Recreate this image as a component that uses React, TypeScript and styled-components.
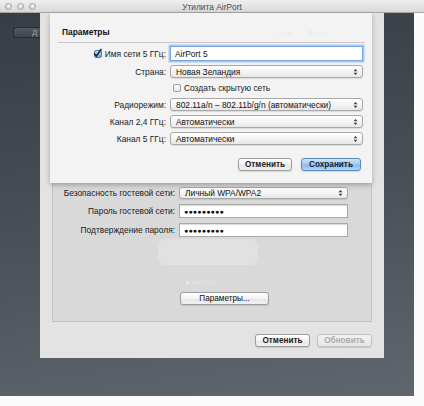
import styled, { createGlobalStyle } from "styled-components";

const Global = createGlobalStyle`
  html, body { margin: 0; padding: 0; background: #fbfbfb; }
  body { font-family: "Liberation Sans", Arial, sans-serif; }
  * { box-sizing: border-box; }
`;

const Screen = styled.div`
  width: 424px;
  height: 406px;
  display: flex;
  flex-direction: column;
  background: #fbfbfb;
  overflow: hidden;
`;

const TitleBar = styled.div`
  height: 13px;
  flex: none;
  display: grid;
  grid-template-columns: 1fr auto 1fr;
  align-items: center;
  background: linear-gradient(#efefef, #d9d9d9);
  border-bottom: 1px solid #a6a6a6;
`;

const Lights = styled.div`
  display: flex;
  gap: 5px;
  padding-left: 5px;
`;

const Light = styled.span`
  width: 7px;
  height: 7px;
  border-radius: 50%;
  border: 1px solid #a3a3a3;
  background: radial-gradient(circle at 50% 35%, #f4f4f4, #c9c9c9);
`;

const Title = styled.div`
  font-size: 8.4px;
  color: #4b4b4b;
  padding-top: 1px;
`;

const Body = styled.div`
  height: 383px;
  flex: none;
  display: flex;
`;

const Desktop = styled.div`
  width: 414px;
  display: flex;
  align-items: flex-start;
  background: linear-gradient(172deg, #363d45 0%, #464d55 45%, #60666d 100%);
`;

const Side = styled.div`
  width: 40px;
  flex: none;
  padding: 14px 0 0 13px;
`;

const DarkButton = styled.div`
  width: 27px;
  height: 11px;
  border: 1px solid #262b31;
  border-right: none;
  border-radius: 3px 0 0 3px;
  background: linear-gradient(#525961, #3c434a);
  color: #9aa2ab;
  font-size: 8px;
  line-height: 9px;
  padding-left: 18px;
`;

const Window = styled.div`
  width: 344px;
  height: 345px;
  flex: none;
  display: flex;
  flex-direction: column;
  background: #e3e3e3;
`;

const Sheet = styled.div`
  position: relative;
  z-index: 1;
  margin-left: 10px;
  width: 322px;
  height: 170px;
  flex: none;
  background: #f3f3f3;
  box-shadow: 0 2px 5px rgba(0, 0, 0, 0.28);
  display: flex;
  flex-direction: column;
`;

const SheetHead = styled.div`
  display: flex;
  align-items: flex-end;
  padding: 12px 0 0 12px;
  height: 24px;
`;

const SheetTitle = styled.div`
  font-size: 8.4px;
  font-weight: bold;
  color: #111;
`;

const Ghost = styled.span<{ $ml?: number }>`
  font-size: 8px;
  color: rgba(0, 0, 0, 0.06);
  margin-left: ${(p) => p.$ml ?? 0}px;
  white-space: nowrap;
`;

const Rule = styled.div`
  height: 1px;
  margin: 5px 7px 0 8px;
  background: #c7c7c7;
`;

const Form = styled.div<{ $label: number; $control: number }>`
  display: grid;
  grid-template-columns: ${(p) => p.$label}px ${(p) => p.$control}px;
  column-gap: 4px;
  row-gap: 4px;
  align-items: center;
`;

const Label = styled.div`
  display: flex;
  justify-content: flex-end;
  align-items: center;
  gap: 3px;
  font-size: 8.4px;
  color: #1a1a1a;
  white-space: nowrap;
`;

const Field = styled.div<{ $h?: number; $focus?: boolean }>`
  height: ${(p) => p.$h ?? 14}px;
  display: flex;
  align-items: center;
  padding-left: 4px;
  background: #fff;
  border: 1px solid ${(p) => (p.$focus ? "#7aa7dd" : "#a9a9a9")};
  box-shadow: ${(p) =>
    p.$focus ? "0 0 0 1.5px #a9c8ee" : "inset 0 1px 1px rgba(0,0,0,0.15)"};
  font-size: 8.4px;
  color: #111;
`;

const Dots = styled.span`
  font-size: 7px;
  letter-spacing: 0.2px;
  color: #111;
`;

const Popup = styled.div<{ $h?: number }>`
  height: ${(p) => p.$h ?? 13}px;
  display: flex;
  align-items: center;
  justify-content: space-between;
  padding: 0 4px 0 5px;
  border: 1px solid #a8a8a8;
  border-radius: 3px;
  background: linear-gradient(#ffffff, #f3f3f3 55%, #e7e7e7);
  box-shadow: 0 1px 1px rgba(0, 0, 0, 0.1);
  font-size: 8.4px;
  color: #111;
  white-space: nowrap;
`;

const Arrows = () => (
  <svg width="5" height="8" viewBox="0 0 5 8">
    <path d="M0.6 3.2 L2.5 0.9 L4.4 3.2 Z M0.6 4.8 L2.5 7.1 L4.4 4.8 Z" fill="#3a3a3a" />
  </svg>
);

const Box = styled.span<{ $on?: boolean }>`
  width: 8px;
  height: 8px;
  flex: none;
  border-radius: 2px;
  border: 1px solid ${(p) => (p.$on ? "#56779e" : "#9c9c9c")};
  background: ${(p) =>
    p.$on ? "linear-gradient(#c3dbf3, #74a5da)" : "linear-gradient(#ffffff, #e6e6e6)"};
  display: inline-flex;
  align-items: center;
  justify-content: center;
  overflow: visible;
`;

const Tick = () => (
  <svg width="9" height="9" viewBox="0 0 9 9" style={{ overflow: "visible" }}>
    <path d="M1.2 4.6 L3.4 7 L8.4 0" fill="none" stroke="#1b2838" strokeWidth="1.5" />
  </svg>
);

const CheckRow = styled.div`
  display: flex;
  align-items: center;
  gap: 3px;
  padding-left: 3px;
  font-size: 8.4px;
  color: #1a1a1a;
  height: 12px;
`;

const ButtonRow = styled.div<{ $top: number; $right: number; $gap: number }>`
  display: flex;
  justify-content: flex-end;
  align-items: center;
  margin-top: ${(p) => p.$top}px;
  padding-right: ${(p) => p.$right}px;
  gap: ${(p) => p.$gap}px;
`;

const Button = styled.div<{ $w: number; $kind?: "default" | "disabled" }>`
  width: ${(p) => p.$w}px;
  height: 13px;
  display: flex;
  align-items: center;
  justify-content: center;
  border-radius: 3px;
  font-size: 8.2px;
  font-weight: bold;
  border: 1px solid
    ${(p) => (p.$kind === "default" ? "#5a88bd" : p.$kind === "disabled" ? "#c2c2c2" : "#9c9c9c")};
  color: ${(p) => (p.$kind === "default" ? "#0f2440" : p.$kind === "disabled" ? "#ababab" : "#222")};
  background: ${(p) =>
    p.$kind === "default"
      ? "linear-gradient(#d3e6fa, #9cc6ef 50%, #86b8ea 52%, #b4d6f6)"
      : p.$kind === "disabled"
      ? "linear-gradient(#f2f2f2, #e6e6e6)"
      : "linear-gradient(#ffffff, #f2f2f2 50%, #e6e6e6 52%, #f1f1f1)"};
  box-shadow: 0 1px 1px rgba(0, 0, 0, 0.12);
  white-space: nowrap;
`;

const Group = styled.div`
  margin-left: 12px;
  width: 320px;
  height: 139px;
  flex: none;
  background: #d9d9d9;
  border: 1px solid #c3c3c3;
  border-top: none;
  display: flex;
  flex-direction: column;
  padding-top: 4px;
`;

const Shade = styled.div`
  margin: 2px 0 0 105px;
  width: 100px;
  height: 26px;
  border-radius: 7px;
  background: rgba(255, 255, 255, 0.22);
`;

const FaintLine = styled.div`
  margin: 13px 0 0 132px;
  height: 9px;
  font-size: 8px;
  color: rgba(255, 255, 255, 0.35);
`;

const Wide = styled(Button)`
  margin: 5px 0 0 127px;
  font-weight: normal;
  color: #111;
`;

export default function App() {
  return (
    <>
      <Global />
      <Screen>
        <TitleBar>
          <Lights>
            <Light />
            <Light />
            <Light />
          </Lights>
          <Title>Утилита AirPort</Title>
          <div />
        </TitleBar>
        <Body>
          <Desktop>
            <Side>
              <DarkButton>Д</DarkButton>
            </Side>
            <Window>
              <Sheet>
                <SheetHead>
                  <SheetTitle>Параметры</SheetTitle>
                  <Ghost $ml={165}>Сеть</Ghost>
                  <Ghost $ml={15}>Диски</Ghost>
                </SheetHead>
                <Rule />
                <Form $label={116} $control={193} style={{ marginTop: 3 }}>
                  <Label>
                    <Box $on>
                      <Tick />
                    </Box>
                    Имя сети 5 ГГц:
                  </Label>
                  <Field $h={15} $focus>AirPort 5</Field>

                  <Label>Страна:</Label>
                  <Popup>
                    Новая Зеландия
                    <Arrows />
                  </Popup>

                  <div />
                  <CheckRow>
                    <Box />
                    Создать скрытую сеть
                  </CheckRow>

                  <Label>Радиорежим:</Label>
                  <Popup>
                    802.11a/n – 802.11b/g/n (автоматически)
                    <Arrows />
                  </Popup>

                  <Label>Канал 2,4 ГГц:</Label>
                  <Popup>
                    Автоматически
                    <Arrows />
                  </Popup>

                  <Label>Канал 5 ГГц:</Label>
                  <Popup>
                    Автоматически
                    <Arrows />
                  </Popup>
                </Form>
                <ButtonRow $top={13} $right={11} $gap={9}>
                  <Button $w={54}>Отменить</Button>
                  <Button $w={60} $kind="default">
                    Сохранить
                  </Button>
                </ButtonRow>
              </Sheet>

              <Group>
                <Form $label={122} $control={169} style={{ rowGap: 5 }}>
                  <Label>Безопасность гостевой сети:</Label>
                  <Popup $h={12}>
                    Личный WPA/WPA2
                    <Arrows />
                  </Popup>

                  <Label>Пароль гостевой сети:</Label>
                  <Field>
                    <Dots>●●●●●●●●●</Dots>
                  </Field>

                  <Label>Подтверждение пароля:</Label>
                  <Field>
                    <Dots>●●●●●●●●●</Dots>
                  </Field>
                </Form>
                <Shade />
                <FaintLine>● AirPort</FaintLine>
                <Wide $w={89}>Параметры...</Wide>
              </Group>

              <ButtonRow $top={12} $right={12} $gap={7}>
                <Button $w={55}>Отменить</Button>
                <Button $w={55} $kind="disabled">
                  Обновить
                </Button>
              </ButtonRow>
            </Window>
          </Desktop>
        </Body>
      </Screen>
    </>
  );
}
